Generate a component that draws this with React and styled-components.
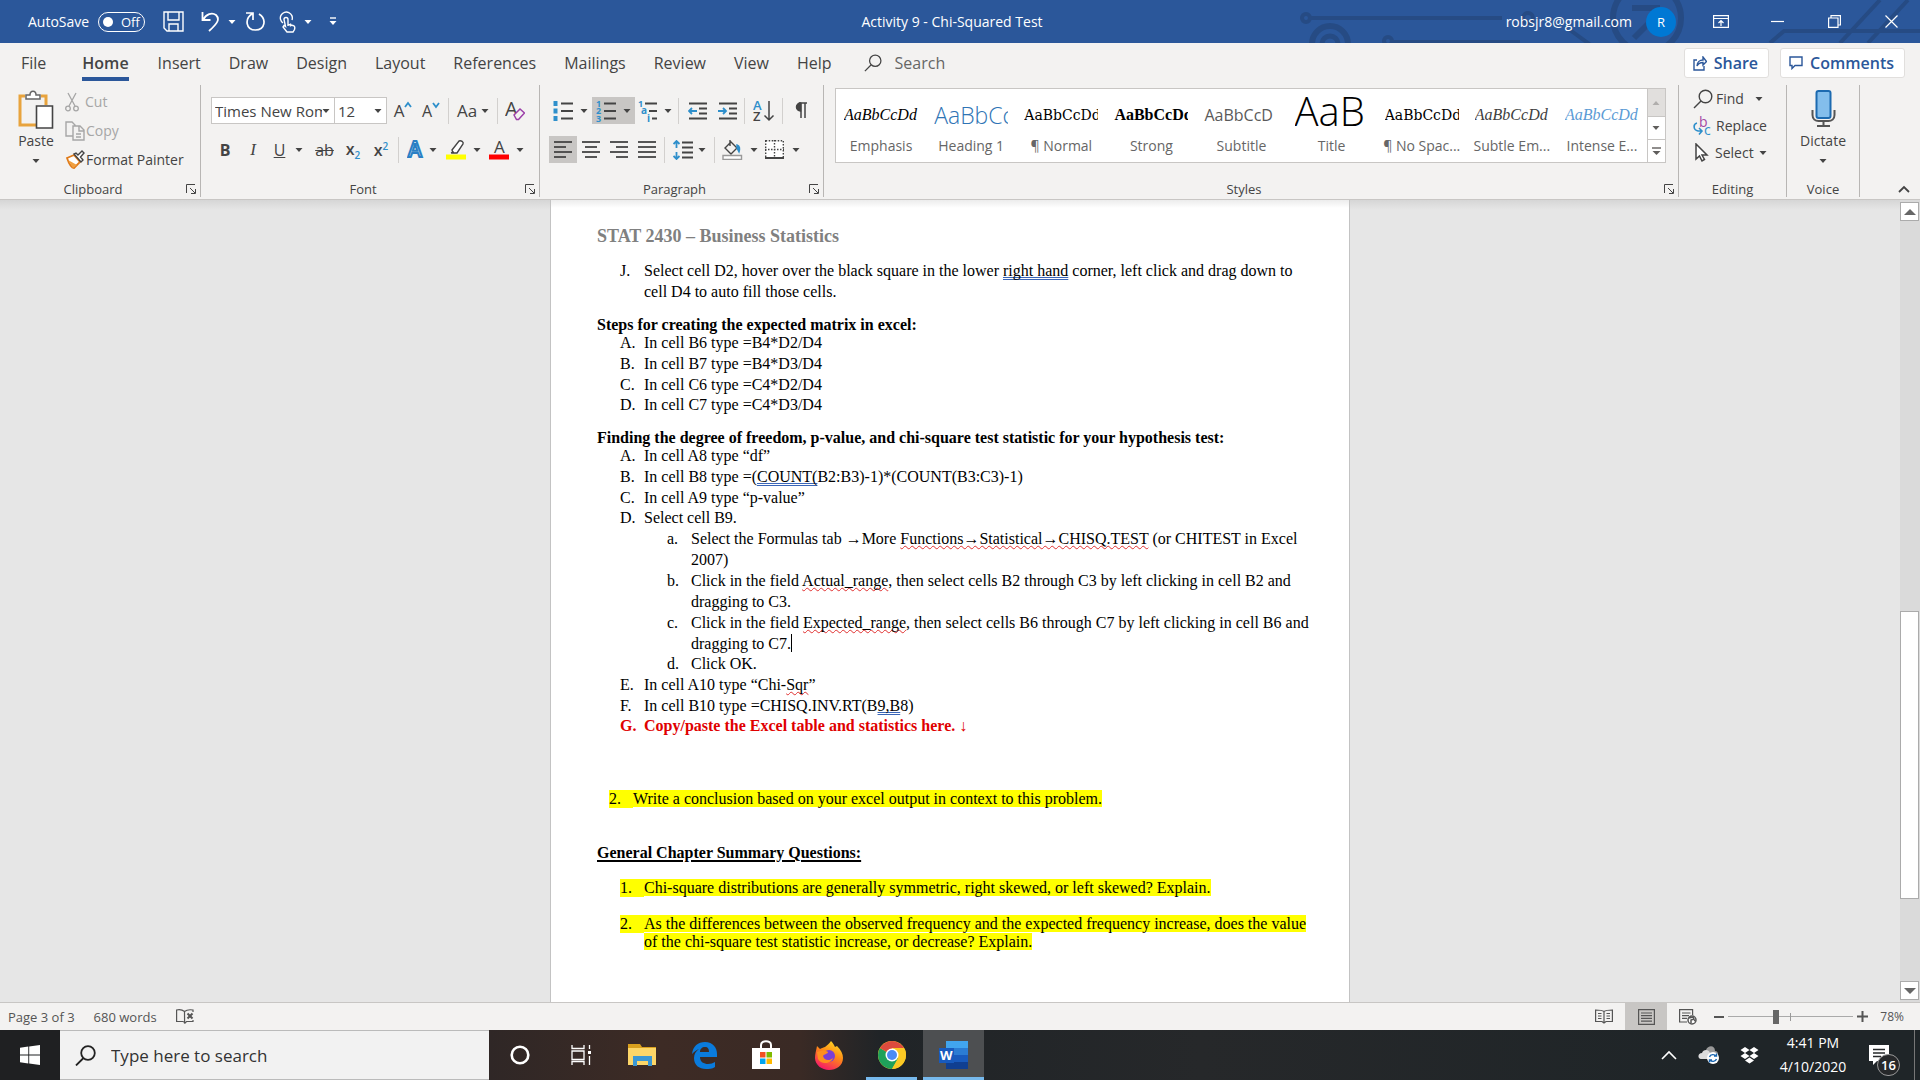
import React from 'react';
import styled, { createGlobalStyle, css } from 'styled-components';

const GlobalStyle = createGlobalStyle`
    * { box-sizing: border-box; }
    body { margin: 0; }
    body, button, input, select { font-family: "Open Sans", "Noto Sans", sans-serif; font-size: 14px; }
    button { background: none; border: 0; padding: 0; color: inherit; }
    svg { display: block; flex: none; }
`

const Window=styled.div`
    display: flex;
    flex-direction: column;
    height: 100vh;
    overflow: hidden;
    color: #444;
    background: #e6e6e6;
`

/* ---------- title bar ---------- */

const TitleBar=styled.header`
    display: grid;
    grid-template-columns: 1fr auto 1fr;
    align-items: center;
    height: 43px;
    flex: none;
    color: #fff;
    background: #2b579a;
    position: relative;
`
const Circuit=styled.svg`
    position: absolute;
    right: 0;
    top: 0;
`
const QuickAccess=styled.div`
    display: flex;
    align-items: center;
    padding-left: 28px;
`
const AutoSaveLabel=styled.label`
    width: 70px;
`
const Toggle=styled.button`
    display: flex;
    align-items: center;
    gap: 8px;
    width: 47px;
    height: 20px;
    padding-left: 4px;
    margin-right: 18px;
    border: 1px solid #fff;
    border-radius: 10px;
    font-size: 13px;
    line-height: 16px;
    &::before {
        content: '';
        width: 10px;
        height: 10px;
        border-radius: 5px;
        background: #fff;
    }
`
const QuickButton=styled.button`
    display: flex;
    align-items: center;
    gap: 8px;
    width: ${p => p.$w}px;
`
const DocTitle=styled.h1`
    margin: 0 16px 0 0;
    font-size: 14px;
    font-weight: 400;
    line-height: 38px;
`
const Account=styled.div`
    display: flex;
    align-items: center;
    justify-content: flex-end;
    position: relative;
`
const Avatar=styled.button`
    width: 30px;
    height: 30px;
    margin: 0 16px 0 14px;
    border-radius: 15px;
    font-size: 13px;
    background: #0078d4;
`
const WindowButton=styled.button`
    display: flex;
    justify-content: center;
    width: 57px;
`

/* ---------- tabs ---------- */

const TabRow=styled.nav`
    display: flex;
    align-items: center;
    height: 40px;
    flex: none;
    padding: 0 15px 0 7px;
    background: #f3f2f1;
`
const Tab=styled.button`
    padding: 0 14px;
    font-size: 16px;
    line-height: 38px;
    ${p => p.$active && css`
        margin: 0 1px 0 8px;
        font-weight: 600;
        background: linear-gradient(#2b579a, #2b579a) center 33px / calc(100% - 28px) 4px no-repeat;
    `}
`
const TabSearch=styled.label`
    display: flex;
    align-items: center;
    gap: 13px;
    flex: 1;
    margin-left: 18px;
    input {
        width: 120px;
        padding: 0;
        border: 0;
        outline: 0;
        background: none;
        font-size: 16px;
        line-height: 38px;
    }
    input::placeholder { color: #666; opacity: 1; }
`
const TabAction=styled.button`
    display: flex;
    align-items: center;
    gap: 7px;
    height: 30px;
    padding: 0 10px 0 8px;
    margin-left: 11px;
    border: 1px solid #e1dfdd;
    border-radius: 3px;
    color: #2b579a;
    font-size: 16px;
    font-weight: 600;
    background: #fff;
`

/* ---------- ribbon ---------- */

const Ribbon=styled.div`
    display: flex;
    height: 117px;
    flex: none;
    background: #f3f2f1;
    border-bottom: 1px solid #c8c6c4;
`
const GroupBox=styled.section`
    display: flex;
    flex-direction: column;
    justify-content: space-between;
    width: ${p => p.$w ? p.$w + 'px' : 'auto'};
    flex: ${p => p.$w ? 'none' : '1'};
    min-width: 0;
    margin: 2px 0;
    border-right: 1px solid #b8b6b4;
`
const GroupBody=styled.div`
    padding: ${p => p.$pad || '12px 9px 0'};
`
const GroupLabel=styled.footer`
    display: flex;
    align-items: center;
    justify-content: center;
    height: 16px;
    font-size: 13px;
    line-height: 16px;
    padding-right: ${p => p.$launcher ? 4 : 0}px;
    span { flex: 1; text-align: center; }
`
const Rows=styled.div`
    display: flex;
    flex-direction: column;
    gap: 12px;
`
const Row=styled.div`
    display: flex;
    align-items: center;
`
const ToolButton=styled.button`
    display: flex;
    align-items: center;
    justify-content: center;
    gap: ${p => p.$gap ?? 7}px;
    width: ${p => p.$w || 28}px;
    height: 27px;
    font-size: 16px;
    background: ${p => p.$active ? '#c8c6c4' : 'none'};
`
const Sep=styled.i`
    width: 1px;
    height: 26px;
    margin: 0 3px;
    background: #d2d0ce;
`
const Combo=styled.label`
    display: flex;
    align-items: center;
    justify-content: space-between;
    width: ${p => p.$w}px;
    height: 27px;
    margin-right: ${p => p.$gap || 0}px;
    padding: 0 4px 0 3px;
    border: 1px solid #c8c6c4;
    background: #fff;
    & + & { border-left: 0; }
    select {
        appearance: none;
        flex: 1;
        min-width: 0;
        padding: 0;
        border: 0;
        color: #444;
        font-size: 15px;
        background: none;
    }
`
const ClipBody=styled.div`
    display: flex;
    gap: 5px;
    font-size: 14px;
`
const BigButton=styled.button`
    display: flex;
    flex-direction: column;
    align-items: center;
    width: ${p => p.$w}px;
    font-size: 14px;
    line-height: 24px;
    svg + svg, svg:last-child { margin-top: 6px; }
`
const StackItem=styled.button`
    display: flex;
    align-items: center;
    gap: ${p => p.$gap ?? 3}px;
    height: ${p => p.$h || 29}px;
    font-size: 14px;
    color: ${p => p.disabled ? '#a6a6a6' : '#444'};
`
const StackLabel=styled.span`
    margin-right: ${p => p.$gap || 0}px;
`
const Gallery=styled.div`
    display: flex;
    height: 75px;
    border: 1px solid #c8c6c4;
    background: #fff;
`
const StyleCard=styled.button`
    display: flex;
    flex-direction: column;
    align-items: center;
    flex: 1;
    min-width: 0;
    padding-top: 8px;
    color: #666;
    line-height: 22px;
`
const Preview=styled.span`
    width: 74px;
    height: 38px;
    overflow: hidden;
    white-space: nowrap;
    text-align: left;
    line-height: ${p => p.$lh || 36}px;
    font-size: ${p => p.$size || 16}px;
    font-family: ${p => p.$font || '"Liberation Serif", serif'};
    font-style: ${p => p.$italic ? 'italic' : 'normal'};
    font-weight: ${p => p.$weight || 400};
    color: ${p => p.$color || '#000'};
`
const GalleryScroll=styled.div`
    display: grid;
    grid-template-rows: 27px 23px 1fr;
    width: 18px;
    button {
        display: flex;
        align-items: center;
        justify-content: center;
        border-left: 1px solid #c8c6c4;
        color: #605e5c;
    }
    button + button { border-top: 1px solid #c8c6c4; }
    button:first-child { background: #e1dfdd; color: #b0aeac; }
`
const RibbonEnd=styled.div`
    display: flex;
    align-items: flex-end;
    justify-content: flex-end;
    width: 60px;
    padding: 0 10px 6px 0;
`

/* ---------- document ---------- */

const Workspace=styled.main`
    display: flex;
    flex: 1;
    min-height: 0;
    background: linear-gradient(#d6d6d6, #e6e6e6 10px);
`
const Canvas=styled.div`
    display: flex;
    justify-content: center;
    flex: 1;
    overflow: hidden;
`
const Page=styled.article`
    width: 800px;
    padding: 24px 36px 40px 46px;
    border: solid #c3c3c3;
    border-width: 0 1px;
    background: linear-gradient(#ececec, #fff 8px);
    color: #000;
    font-family: "Liberation Serif", serif;
    font-size: 16px;
    line-height: 21px;
`
const PageHeader=styled.p`
    margin: 0 0 12px;
    color: #808080;
    font-size: 18px;
    font-weight: 700;
    line-height: 24px;
`
const Heading=styled.h2`
    margin: ${p => p.$top || 14}px 0 0;
    font-size: 16px;
    line-height: 17px;
`
const Underlined=styled.u`
    text-decoration-thickness: 2px;
    text-underline-offset: 2px;
`
const List=styled.ol`
    margin: 0;
    padding: 0;
    list-style: none;
`
const Item=styled.li`
    display: grid;
    grid-template-columns: 24px 1fr;
    margin-left: ${p => p.$indent || 23}px;
    margin-top: ${p => p.$top || 0}px;
    line-height: ${p => p.$lh || 21}px;
    color: ${p => p.$red ? '#e00000' : 'inherit'};
    font-weight: ${p => p.$red ? 700 : 400};
`
const Mark=styled.mark`
    color: #000;
    background: #ff0;
`
const MarkedNumber=styled(Mark)`
    display: block;
    height: 18px;
`
const Grammar=styled.span`
    text-decoration: underline double #3a66b8 1px;
    text-underline-offset: 1px;
    text-decoration-skip-ink: none;
`
const Spelling=styled.span`
    text-decoration: underline wavy #e03030 1px;
    text-underline-offset: 1px;
    text-decoration-skip-ink: none;
`
const Cursor=styled.i`
    display: inline-block;
    width: 1px;
    height: 18px;
    vertical-align: text-bottom;
    background: #000;
`
const ScrollTrack=styled.div`
    display: flex;
    flex-direction: column;
    width: 20px;
    padding: 2px 1px 2px 0;
    background: #dadada;
`
const ScrollButton=styled.button`
    display: flex;
    align-items: center;
    justify-content: center;
    height: 19px;
    border: 1px solid #ababab;
    background: #fff;
    color: #666;
`
const ScrollThumb=styled.div`
    flex: 287;
    border: 1px solid #ababab;
    background: #fff;
`
const ScrollGap=styled.div`
    flex: ${p => p.$grow};
`

/* ---------- status bar ---------- */

const StatusBar=styled.footer`
    display: flex;
    align-items: center;
    height: 28px;
    flex: none;
    padding: 0 16px 0 8px;
    border-top: 1px solid #c8c6c4;
    background: #f3f2f1;
    font-size: 13px;
    color: #555;
`
const StatusText=styled.button`
    font-size: 13px;
    line-height: 24px;
    margin-right: 19px;
`
const ViewButton=styled.button`
    display: flex;
    align-items: center;
    justify-content: center;
    width: 42px;
    height: 27px;
    background: ${p => p.$active ? '#c8c6c4' : 'none'};
`
const Spacer=styled.div`
    flex: 1;
`
const ZoomOutButton=styled.button`
    margin-left: 5px;
`
const ZoomSlider=styled.input`
    appearance: none;
    width: 125px;
    height: 16px;
    margin: 0 4px;
    background:
        linear-gradient(#999, #999) 62px center / 1px 8px no-repeat,
        linear-gradient(#aaa, #aaa) center / 100% 1px no-repeat;
    &::-webkit-slider-thumb {
        appearance: none;
        width: 6px;
        height: 14px;
        background: #666;
    }
`
const ZoomValue=styled.button`
    width: 36px;
    font-size: 12px;
    text-align: right;
`

/* ---------- taskbar ---------- */

const Taskbar=styled.footer`
    display: flex;
    height: 50px;
    flex: none;
    color: #fff;
    background: linear-gradient(90deg, #1f2022 60px, #2f2726 489px, #3d2b25 660px, #3a2a25 800px, #202427 880px, #26282a 1200px, #1f2528 1700px);
`
const TaskButton=styled.button`
    display: flex;
    align-items: center;
    justify-content: center;
    width: ${p => p.$w || 62}px;
    border-bottom: ${p => p.$open ? '3px solid #76b9ed' : '0'};
    padding-top: ${p => p.$open ? '3px' : '0'};
    margin: ${p => p.$margin || '0'};
    background: ${p => p.$active ? '#4d4f51' : 'none'};
`
const TaskSearch=styled.label`
    display: flex;
    align-items: center;
    gap: 15px;
    width: 429px;
    padding-left: 15px;
    border: solid #bbb;
    border-width: 1px 0;
    background: #f2f2f2;
    input {
        flex: 1;
        min-width: 0;
        padding: 0;
        border: 0;
        outline: 0;
        background: none;
        font-size: 17px;
    }
    input::placeholder { color: #333; opacity: 1; }
`
const Tray=styled.div`
    display: flex;
    align-items: center;
    flex: 1;
    justify-content: flex-end;
    padding-right: 5px;
`
const TrayButton=styled.button`
    display: flex;
    justify-content: center;
    width: 40px;
`
const Clock=styled.button`
    width: 88px;
    line-height: 24px;
    font-size: 14px;
`
const Notices=styled.button`
    display: flex;
    position: relative;
    width: 46px;
    height: 50px;
    margin-left: 12px;
    padding-top: 15px;
    border-right: 1px solid #777;
`
const NoticeCount=styled.span`
    position: absolute;
    left: 8px;
    top: 24px;
    width: 23px;
    height: 22px;
    border: 1px solid #999;
    border-radius: 11px;
    background: #26282a;
    font-size: 13px;
    font-weight: 600;
    line-height: 20px;
`

/* ---------- icons ---------- */

const Icon = ({ w = 20, h = w, box, sw = 1.4, children, ...rest }) => (
    <svg width={w} height={h} viewBox={box || `0 0 ${w} ${h}`} fill="none" stroke="currentColor" strokeWidth={sw} aria-hidden="true" {...rest}>
        {children}
    </svg>
)
const T = ({ x, y, s = 16, c = 'currentColor', b = 400, children }) => (
    <text x={x} y={y} fontSize={s} fontWeight={b} fill={c} stroke="none">{children}</text>
)
const Caret = () => <Icon w={8} h={4}><path d="M0.5 0h7L4 4z" fill="currentColor" stroke="none"/></Icon>
const CaretUp = () => <Icon w={8} h={4}><path d="M0.5 4h7L4 0z" fill="currentColor" stroke="none"/></Icon>
const Magnifier = ({ w, sw }) => (
    <Icon w={w} box="0 0 20 20" sw={sw || 1.4}><circle cx="12.5" cy="7.5" r="6.3"/><path d="M8 12L1 19"/></Icon>
)
const Launcher = () => <Icon w={10} sw={1}><path d="M.5 9V.5H9M4 4l5 5M9.5 5v4.5H5"/></Icon>
const Lines = ({ rows }) => (
    <Icon w={18} h={20} sw={1.8}>
        {rows.map(([a, b], i) => <path key={i} d={`M${a} ${2 + i * 5}H${b}`}/>)}
    </Icon>
)
const blue = '#2e8fcb'

const Group = ({ label, launcher, $w, $pad, children }) => (
    <GroupBox $w={$w}>
        <GroupBody $pad={$pad}>{children}</GroupBody>
        <GroupLabel $launcher={launcher}>
            <span>{label}</span>
            {launcher && <button aria-label={`${label} settings`}><Launcher/></button>}
        </GroupLabel>
    </GroupBox>
)

const sans = '"Open Sans", sans-serif'
const previews = [
    { name: 'Emphasis', text: 'AaBbCcDd', $italic: true },
    { name: 'Heading 1', text: 'AaBbCc', $font: sans, $size: 23, $weight: 300, $color: '#2e74b5' },
    { name: '¶ Normal', text: 'AaBbCcDd', $font: '"DejaVu Serif", serif', $size: 14 },
    { name: 'Strong', text: 'AaBbCcDd', $weight: 700 },
    { name: 'Subtitle', text: 'AaBbCcD', $font: sans, $size: 16, $color: '#5a5a5a' },
    { name: 'Title', text: 'AaB', $font: sans, $size: 40, $weight: 300, $lh: 28 },
    { name: '¶ No Spac...', text: 'AaBbCcDd', $font: '"DejaVu Serif", serif', $size: 14 },
    { name: 'Subtle Em...', text: 'AaBbCcDd', $italic: true, $color: '#404040' },
    { name: 'Intense E...', text: 'AaBbCcDd', $italic: true, $color: '#5b9bd5' },
]

function TopBar(){
    return (
        <TitleBar>
            <Circuit width="640" height="43" fill="none" stroke="#264b84" strokeWidth="4" aria-hidden="true">
                <circle cx="26" cy="18" r="4"/><path d="M31 18H222"/>
                <circle cx="50" cy="44" r="18" strokeWidth="6"/><circle cx="50" cy="44" r="8" strokeWidth="5"/>
                <circle cx="108" cy="41" r="4"/><path d="M113 42H240M290 30l22 16"/>
                <circle cx="248" cy="18" r="5"/>
                <circle cx="367" cy="18" r="34" strokeWidth="6"/><path d="M352 8h28M382 10l-28 28" strokeWidth="6"/>
                <path d="M490 43l14-12H640M560 43L600 0M588 43L628 0" strokeWidth="4"/>
            </Circuit>
            <QuickAccess>
                <AutoSaveLabel htmlFor="autosave">AutoSave</AutoSaveLabel>
                <Toggle id="autosave" role="switch" aria-checked="false">Off</Toggle>
                <QuickButton $w={38} aria-label="Save">
                    <Icon w={21}><path d="M1 1h19v19H4l-3-3zM5 1v8h11V1M6 20v-7h9v7"/></Icon>
                </QuickButton>
                <QuickButton $w={44} aria-label="Undo">
                    <Icon w={19} h={21} sw={1.8}><path d="M1.500 1v8h8M2 9C5 3 11 1 15 4c4 4 2 8-7 16"/></Icon><Caret/>
                </QuickButton>
                <QuickButton $w={34} aria-label="Repeat">
                    <Icon w={21} sw={1.7}><path d="M1 2h7v7M7.500 2.500C-1 8 1 19 10.500 19S22 8 14 3"/></Icon>
                </QuickButton>
                <QuickButton $w={50} aria-label="Touch mode">
                    <Icon w={17} h={22}><path d="M4 12a6 6 0 1 1 9-3M5 8.500a2 2 0 1 1 4 0v5l5 1c2 .5 2 2 1.500 4L14 21H8l-4-5 1-1.500 1.500 1zM9 12v3M11.500 12.500v3"/></Icon><Caret/>
                </QuickButton>
                <QuickButton $w={12} aria-label="Customize quick access">
                    <Icon w={8} h={9}><path d="M1 1h6"/><path d="M.5 4h7L4 8z" fill="currentColor" stroke="none"/></Icon>
                </QuickButton>
            </QuickAccess>
            <DocTitle>Activity 9 - Chi-Squared Test</DocTitle>
            <Account>
                <span>robsjr8@gmail.com</span>
                <Avatar>R</Avatar>
                <WindowButton aria-label="Ribbon display options">
                    <Icon w={16} h={13} sw={1.2}><path d="M.6.6h14.800v11.800H.6zM.6 3.500h14.800M8 11V5.500M5.500 8L8 5.500 10.500 8"/></Icon>
                </WindowButton>
                <WindowButton aria-label="Minimize"><Icon w={13} sw={1.2}><path d="M0 6.500h13"/></Icon></WindowButton>
                <WindowButton aria-label="Restore">
                    <Icon w={13} sw={1.2}><path d="M.6 3h9.400v9.400H.6zM3 3V.6h9.400V10H10"/></Icon>
                </WindowButton>
                <WindowButton aria-label="Close"><Icon w={13} sw={1.2}><path d="M.5.5l12 12M12.500.5l-12 12"/></Icon></WindowButton>
            </Account>
        </TitleBar>
    )
}

function Tabs(){
    return (
        <TabRow>
            <Tab>File</Tab>
            <Tab $active>Home</Tab>
            {['Insert', 'Draw', 'Design', 'Layout', 'References', 'Mailings', 'Review', 'View', 'Help'].map(t => (
                <Tab key={t}>{t}</Tab>
            ))}
            <TabSearch>
                <Magnifier w={18}/>
                <input placeholder="Search" aria-label="Search commands"/>
            </TabSearch>
            <TabAction>
                <Icon w={14} h={15}><path d="M4 4H1v10h10v-4M4 10c0-4 3-6 6-6V1l3.500 4.500L10 9V6.500C7 6.500 5 8 4 10z"/></Icon>Share
            </TabAction>
            <TabAction>
                <Icon w={14} h={14}><path d="M1 1h12v8.500H6L3 12.500v-3H1z"/></Icon>Comments
            </TabAction>
        </TabRow>
    )
}

function ClipboardGroup(){
    return (
        <Group label="Clipboard" launcher $w={201} $pad="2px 0 0 12px">
            <ClipBody>
                <BigButton $w={48}>
                    <Icon w={36} h={42} sw={2}>
                        <path d="M7 9H2v29h18M23 9h5v9" stroke="#e8a33d" strokeWidth="3"/>
                        <path d="M8 12V8h4c0-5 6-5 6 0h4v4z" fill="#fff" stroke="#666" strokeWidth="1.5"/>
                        <path d="M18.500 19h16v22h-16z" fill="#fff" stroke="#444" strokeWidth="1.600"/>
                    </Icon>
                    Paste
                    <Caret/>
                </BigButton>
                <div>
                    <StackItem disabled $gap={6}>
                        <Icon w={14} h={20} sw={1.3}><path d="M3 1l7 13M11 1L4 14"/><circle cx="3" cy="16.500" r="2.300"/><circle cx="11" cy="16.500" r="2.300"/></Icon>Cut
                    </StackItem>
                    <StackItem disabled $gap={1}>
                        <Icon w={20} h={20} sw={1.400}><path d="M8 15H1V1h6l3 3v1M8 5h7l4 4v10H8zM14 5v5h5M11 13h5M11 16h5"/></Icon>Copy
                    </StackItem>
                    <StackItem $gap={1}>
                        <Icon w={20} h={19}><path d="M2 8l7-3 6 7-6 6c-2 0-5-4-7-10z" fill="#fff" stroke="#e07b1a" strokeWidth="1.800"/><path d="M3 10l9 5-4 3z" fill="#f0a040" stroke="none"/><path d="M9 4l7 8 2-2-2.500-3L19 3l-2-2-4 4-2-2z" fill="#fff" stroke="#444"/></Icon>Format Painter
                    </StackItem>
                </div>
            </ClipBody>
        </Group>
    )
}

const Letter=styled.span`
    font-size: ${p => p.$size || 17}px;
    line-height: 22px;
    font-weight: ${p => p.$weight || 400};
    font-style: ${p => p.$italic ? 'italic' : 'normal'};
    font-family: ${p => p.$italic ? '"Liberation Serif", serif' : 'inherit'};
    text-decoration: ${p => p.$deco || 'none'};
    sub, sup { color: ${blue}; font-size: 10px; line-height: 10px; }
`
const Grow = ({ d }) => <Icon w={8} h={20} sw={1.8}><path d={d} stroke={blue}/></Icon>

function FontGroup(){
    return (
        <Group label="Font" launcher $w={339} $pad="12px 0 0 10px">
            <Rows>
                <Row>
                    <Combo $w={124}>
                        <select aria-label="Font name"><option>Times New Roman</option></select><Caret/>
                    </Combo>
                    <Combo $w={52} $gap={2}>
                        <select aria-label="Font size"><option>12</option></select><Caret/>
                    </Combo>
                    <ToolButton $gap={0} aria-label="Grow font"><Letter>A</Letter><Grow d="M1 6l3-4 3 4"/></ToolButton>
                    <ToolButton $gap={0} aria-label="Shrink font"><Letter $size={16}>A</Letter><Grow d="M1 2l3 4 3-4"/></ToolButton>
                    <Sep/>
                    <ToolButton $w={42} $gap={4}><Letter $size={17}>Aa</Letter><Caret/></ToolButton>
                    <Sep/>
                    <ToolButton aria-label="Clear formatting">
                        <Icon w={20} h={21} sw={1.500}><T x={0} y={16} s={20}>A</T><path d="M9 15l6-6 4.500 4-6 6.500h-2z" fill="#f3f2f1" stroke="#9b3fa8"/></Icon>
                    </ToolButton>
                </Row>
                <Row>
                    <ToolButton aria-label="Bold"><Letter $weight={700} $size={16}>B</Letter></ToolButton>
                    <ToolButton aria-label="Italic"><Letter $italic>I</Letter></ToolButton>
                    <ToolButton $w={43} $gap={10} aria-label="Underline"><Letter $deco="underline" $size={16}>U</Letter><Caret/></ToolButton>
                    <ToolButton $w={29} aria-label="Strikethrough"><Letter $deco="line-through" $size={16}>ab</Letter></ToolButton>
                    <ToolButton aria-label="Subscript"><Letter $weight={600} $size={16}>x<sub>2</sub></Letter></ToolButton>
                    <ToolButton aria-label="Superscript"><Letter $weight={600} $size={16}>x<sup>2</sup></Letter></ToolButton>
                    <Sep/>
                    <ToolButton $w={40} $gap={4} aria-label="Text effects">
                        <Icon w={18} h={20}><text x="1" y="17" fontSize="21" fontWeight="600" fill="#d5e8f7" stroke="#2a7fc4" strokeWidth="2">A</text></Icon>
                        <Caret/>
                    </ToolButton>
                    <ToolButton $w={43} aria-label="Highlight">
                        <Icon w={20} h={21}><path d="M6 11l7-9c2-1 5 1 4 3l-6 9H7zM5 14l3-1" fill="#fff"/><path d="M0 18h20" stroke="#ff0" strokeWidth="5"/></Icon>
                        <Caret/>
                    </ToolButton>
                    <ToolButton $w={43} aria-label="Font color">
                        <Icon w={20} h={21} sw={1.500}><T x={5} y={14} s={17}>A</T><path d="M0 18h20" stroke="#f00" strokeWidth="5"/></Icon>
                        <Caret/>
                    </ToolButton>
                </Row>
            </Rows>
        </Group>
    )
}

function ParagraphGroup(){
    return (
        <Group label="Paragraph" launcher $w={284} $pad="12px 0 0 9px">
            <Rows>
                <Row>
                    <ToolButton $w={43} aria-label="Bullets">
                        <Icon w={20} h={20} sw={1.8}><path d="M8 2.500h12M8 10h12M8 17.500h12"/><path d="M2.500 0v5M2.500 7.500v5M2.500 15v5" stroke={blue} strokeWidth="4"/></Icon><Caret/>
                    </ToolButton>
                    <ToolButton $w={43} $active aria-label="Numbering">
                        <Icon w={20} h={22} sw={1.8}><path d="M8 3.500h12M8 11h12M8 18.500h12"/><T x={0} y={7} s={9} c={blue} b={700}>1</T><T x={0} y={14} s={9} c={blue} b={700}>2</T><T x={0} y={22} s={9} c={blue} b={700}>3</T></Icon><Caret/>
                    </ToolButton>
                    <ToolButton $w={40} $gap={6} aria-label="Multilevel list">
                        <Icon w={20} h={22} sw={1.8}><path d="M7 3.500h12M11 11h8M14 18.500h5"/><T x={0} y={7} s={9} c={blue} b={700}>1</T><T x={3} y={14} s={10} c={blue} b={700}>a</T><T x={9} y={22} s={10} c={blue} b={700}>i</T></Icon><Caret/>
                    </ToolButton>
                    <Sep/>
                    <ToolButton $w={31} aria-label="Decrease indent">
                        <Icon w={19} h={18} sw={1.8}><path d="M1 1.500h18M11 6.500h8M11 11.500h8M1 16.500h18"/><path d="M9 9H1M4 6L1 9l3 3" stroke={blue}/></Icon>
                    </ToolButton>
                    <ToolButton aria-label="Increase indent">
                        <Icon w={19} h={18} sw={1.8}><path d="M1 1.500h18M11 6.500h8M11 11.500h8M1 16.500h18"/><path d="M0 9h8M5 6l3 3-3 3" stroke={blue}/></Icon>
                    </ToolButton>
                    <Sep/>
                    <ToolButton $w={31} aria-label="Sort">
                        <Icon w={22} h={22} sw={1.500}><T x={0} y={10} s={13} c={blue} b={600}>A</T><T x={0} y={21} s={13} b={600}>Z</T><path d="M16 1v19M11.500 15.500L16 20l4.500-4.500"/></Icon>
                    </ToolButton>
                    <Sep/>
                    <ToolButton $w={29} aria-label="Show paragraph marks">
                        <Icon w={13} h={17} sw={1.500}><path d="M6.500 1A4 4 0 0 0 6.500 9z" fill="currentColor"/><path d="M5 1h8M7 1v15M11 1v15"/></Icon>
                    </ToolButton>
                </Row>
                <Row>
                    <ToolButton $active aria-label="Align left"><Lines rows={[[0, 18], [0, 12], [0, 18], [0, 12]]}/></ToolButton>
                    <ToolButton aria-label="Center"><Lines rows={[[0, 18], [3, 15], [0, 18], [3, 15]]}/></ToolButton>
                    <ToolButton aria-label="Align right"><Lines rows={[[0, 18], [6, 18], [0, 18], [6, 18]]}/></ToolButton>
                    <ToolButton aria-label="Justify"><Lines rows={[[0, 18], [0, 18], [0, 18], [0, 18]]}/></ToolButton>
                    <Sep/>
                    <ToolButton $w={43} $gap={5} aria-label="Line spacing">
                        <Icon w={20} h={20} sw={1.8}><path d="M9 2.500h11M9 7.500h11M9 12.500h11M9 17.500h11"/><path d="M3.500 1v7M3.500 12v7M.5 4l3-3 3 3M.5 16l3 3 3-3" stroke={blue}/></Icon><Caret/>
                    </ToolButton>
                    <Sep/>
                    <ToolButton $w={43} aria-label="Shading">
                        <Icon w={21} h={21}><path d="M8 1v6M9 3l6 6-6 6-6-6z"/><path d="M15 6c3 1 3 4 2 7l-2-4z" fill={blue} stroke={blue}/><path d="M1 16.500h18.500v4H1z" stroke="#999" fill="#fff"/></Icon><Caret/>
                    </ToolButton>
                    <ToolButton $w={43} $gap={8} aria-label="Borders">
                        <Icon w={19} h={19}><path d="M.7.700h17.600v17.600H.7zM9.500 0v18M0 9.500h19" strokeDasharray="1.500 1.500" fill="#fff"/><path d="M0 18h19" strokeWidth="2"/></Icon><Caret/>
                    </ToolButton>
                </Row>
            </Rows>
        </Group>
    )
}

function StylesGroup(){
    return (
        <Group label="Styles" launcher $pad="3px 12px 0 11px">
            <Gallery>
                {previews.map(({ name, text, ...look }) => (
                    <StyleCard key={name}>
                        <Preview {...look}>{text}</Preview>
                        {name}
                    </StyleCard>
                ))}
                <GalleryScroll>
                    <button aria-label="Previous styles"><CaretUp/></button>
                    <button aria-label="Next styles"><Caret/></button>
                    <button aria-label="More styles">
                        <Icon w={9} h={9}><path d="M0 1h9"/><path d="M.5 4h8l-4 4z" fill="currentColor" stroke="none"/></Icon>
                    </button>
                </GalleryScroll>
            </Gallery>
        </Group>
    )
}

function EditingGroups(){
    return (
        <>
            <Group label="Editing" $w={108} $pad="0 0 0 14px">
                <div>
                    <StackItem $h={27}>
                        <Magnifier w={20}/><StackLabel $gap={8}>Find</StackLabel><Caret/>
                    </StackItem>
                    <StackItem $h={27} $gap={4}>
                        <Icon w={19} h={20} sw={1.600}><T x={6} y={11} s={14} c="#a349a4">b</T><T x={11} y={19} s={14} c={blue}>c</T><path d="M4 7c-4 1-4 7 1 8h4M6 12l3 3-3 3.500" stroke={blue}/></Icon>Replace
                    </StackItem>
                    <StackItem $h={27} $gap={5}>
                        <Icon w={17} h={20} sw={1.500}><path d="M3 1v15l3.500-3 2.500 5 2.500-1.500L9 12h5z" fill="#fff"/></Icon>Select<Caret/>
                    </StackItem>
                </div>
            </Group>
            <Group label="Voice" $w={73} $pad="2px 0 0">
                <BigButton $w={72}>
                    <Icon w={25} h={42} sw={2}><rect x="5.500" y="4" width="14" height="27" rx="2" fill="#83beec" stroke="#1c6ab0"/><path d="M1.500 23v5c0 4 3 6 6 6h10c3 0 6-2 6-6v-5M12.500 34v5M6 39h13" stroke="#555"/></Icon>
                    Dictate
                    <Caret/>
                </BigButton>
            </Group>
        </>
    )
}

function Document(){
    return (
        <Workspace>
            <Canvas>
                <Page>
                    <PageHeader>STAT 2430 – Business Statistics</PageHeader>
                    <List>
                        <Item><span>J.</span><span>Select cell D2, hover over the black square in the lower <Grammar>right hand</Grammar> corner, left click and drag down to cell D4 to auto fill those cells.</span></Item>
                    </List>
                    <Heading>Steps for creating the expected matrix in excel:</Heading>
                    <List>
                        <Item $lh={20}><span>A.</span><span>In cell B6 type =B4*D2/D4</span></Item>
                        <Item><span>B.</span><span>In cell B7 type =B4*D3/D4</span></Item>
                        <Item><span>C.</span><span>In cell C6 type =C4*D2/D4</span></Item>
                        <Item $lh={20}><span>D.</span><span>In cell C7 type =C4*D3/D4</span></Item>
                    </List>
                    <Heading>Finding the degree of freedom, p-value, and chi-square test statistic for your hypothesis test:</Heading>
                    <List>
                        <Item $lh={20}><span>A.</span><span>In cell A8 type “df”</span></Item>
                        <Item><span>B.</span><span>In cell B8 type =(<Grammar>COUNT(</Grammar>B2:B3)-1)*(COUNT(B3:C3)-1)</span></Item>
                        <Item><span>C.</span><span>In cell A9 type “p-value”</span></Item>
                        <Item $lh={20}><span>D.</span><span>Select cell B9.</span></Item>
                    </List>
                    <List>
                        <Item $indent={70}><span>a.</span><span>Select the Formulas tab →More <Spelling>Functions→Statistical→CHISQ.TEST</Spelling> (or CHITEST in Excel 2007)</span></Item>
                        <Item $indent={70}><span>b.</span><span>Click in the field <Spelling>Actual_range</Spelling>, then select cells B2 through C3 by left clicking in cell B2 and dragging to C3.</span></Item>
                        <Item $indent={70}><span>c.</span><span>Click in the field <Spelling>Expected_range</Spelling>, then select cells B6 through C7 by left clicking in cell B6 and dragging to C7.<Cursor/></span></Item>
                        <Item $indent={70} $lh={20}><span>d.</span><span>Click OK.</span></Item>
                    </List>
                    <List>
                        <Item><span>E.</span><span>In cell A10 type “Chi-<Spelling>Sqr</Spelling>”</span></Item>
                        <Item><span>F.</span><span>In cell B10 type =CHISQ.INV.RT(B<Grammar>9,B</Grammar>8)</span></Item>
                        <Item $red $lh={20}><span>G.</span><span>Copy/paste the Excel table and statistics here. ↓</span></Item>
                    </List>
                    <List>
                        <Item $indent={12} $top={54} $lh={18}><MarkedNumber>2.</MarkedNumber><span><Mark>Write a conclusion based on your excel output in context to this problem.</Mark></span></Item>
                    </List>
                    <Heading $top={36}><Underlined>General Chapter Summary Questions:</Underlined></Heading>
                    <List>
                        <Item $top={18} $lh={18}><MarkedNumber>1.</MarkedNumber><span><Mark>Chi-square distributions are generally symmetric, right skewed, or left skewed? Explain.</Mark></span></Item>
                        <Item $top={18} $lh={18}><MarkedNumber>2.</MarkedNumber><span><Mark>As the differences between the observed frequency and the expected frequency increase, does the value of the chi-square test statistic increase, or decrease? Explain.</Mark></span></Item>
                    </List>
                </Page>
            </Canvas>
            <ScrollTrack>
                <ScrollButton aria-label="Scroll up"><Icon w={12} h={6}><path d="M0 6h12L6 0z" fill="currentColor" stroke="none"/></Icon></ScrollButton>
                <ScrollGap $grow={391}/>
                <ScrollThumb/>
                <ScrollGap $grow={82}/>
                <ScrollButton aria-label="Scroll down"><Icon w={12} h={6}><path d="M0 0h12L6 6z" fill="currentColor" stroke="none"/></Icon></ScrollButton>
            </ScrollTrack>
        </Workspace>
    )
}

function Status(){
    return (
        <StatusBar>
            <StatusText>Page 3 of 3</StatusText>
            <StatusText>680 words</StatusText>
            <StatusText aria-label="Proofing errors">
                <Icon w={18} h={15} sw={1.200}><path d="M8.500 2.500C6 .5 3 .5.6 1v11.500h6c1 0 2 1 2 2zM8.500 2.500C11 .5 14 .5 17 1v2M17 11v1.500h-6.500l-2 2"/><path d="M11.500 4.500l5 5M16.500 4.500l-5 5" strokeWidth="2"/></Icon>
            </StatusText>
            <Spacer/>
            <ViewButton aria-label="Read mode">
                <Icon w={18} h={15} sw={1.200}><path d="M9 2.500C7 1 3 1 .6 1v11.500H7l2 1.500 2-1.500h6.400V1C15 1 11 1 9 2.500zV14M3 4.500h3.500M3 7h3.500M3 9.500h3.500M11.500 4.500H15M11.500 7H15M11.500 9.500H15"/></Icon>
            </ViewButton>
            <ViewButton $active aria-label="Print layout">
                <Icon w={17} h={16} sw={1.200}><path d="M.6.600h15.800v14.800H.6zM3 4h11M3 6.700h11M3 9.400h11M3 12.100h11"/></Icon>
            </ViewButton>
            <ViewButton aria-label="Web layout">
                <Icon w={18} h={16} sw={1.200}><path d="M8 13H.6V.600h13V6M3 4h8.500M3 6.700h7M3 9.400h5"/><circle cx="13" cy="11" r="4" fill="#fff" strokeWidth="1.500"/><path d="M10 9l4-1 1 2-3 1v3M15 12l1.500-1" strokeWidth="1.500"/></Icon>
            </ViewButton>
            <ZoomOutButton aria-label="Zoom out"><Icon w={10} sw={2}><path d="M0 5h10"/></Icon></ZoomOutButton>
            <ZoomSlider type="range" min="0" max="100" defaultValue="38" aria-label="Zoom"/>
            <button aria-label="Zoom in"><Icon w={11} sw={2}><path d="M0 5.500h11M5.500 0v11"/></Icon></button>
            <ZoomValue>78%</ZoomValue>
        </StatusBar>
    )
}

function BottomBar(){
    return (
        <Taskbar>
            <TaskButton $w={60} aria-label="Start">
                <Icon w={20} h={20} stroke="none"><path d="M0 2.800L8.300 1.600v7.900H0zM9.200 1.500L20 0v9.500H9.200zM0 10.500h8.300v7.900L0 17.200zM9.200 10.500H20V20L9.200 18.500z" fill="#fff"/></Icon>
            </TaskButton>
            <TaskSearch>
                <Icon w={21} sw={1.800} stroke="#222"><circle cx="13" cy="8" r="6.800"/><path d="M8.500 13L1 20.500"/></Icon>
                <input placeholder="Type here to search" aria-label="Search Windows"/>
            </TaskSearch>
            <TaskButton aria-label="Cortana"><Icon w={20} sw={2.600}><circle cx="10" cy="10" r="8.300"/></Icon></TaskButton>
            <TaskButton $w={60} aria-label="Task view">
                <Icon w={21} h={20} sw={1.300}><path d="M1 0v3.500h12V0M1 6h12v8.500H1zM1 20v-3.500h12V20M18.500 0v4M18.500 11v9"/><path d="M17 6h3v3h-3z" fill="#fff" stroke="none"/></Icon>
            </TaskButton>
            <TaskButton aria-label="File Explorer">
                <Icon w={28} h={24} stroke="none"><path d="M0 1h12l2 3h14v18H0z" fill="#d9a01e"/><path d="M0 5h28v17H0z" fill="#fcd668"/><path d="M5 23V13h19v10h-4v-5H9v5z" fill="#3a97d3"/></Icon>
            </TaskButton>
            <TaskButton aria-label="Edge">
                <Icon w={26} h={27} stroke="none"><path d="M1 12C2 4 7 0 14 0c8 0 12 6 12 12v3H9c0 5 4 7 8 7 3 0 5-1 7-2v5c-3 2-6 2-9 2-7 0-12-4-12-11 0-4 2-7 5-9-3 1-5 3-7 5zM9 10h9c0-3-1-5-4-5s-5 2-5 5z" fill="#0a7bdc"/></Icon>
            </TaskButton>
            <TaskButton aria-label="Store">
                <Icon w={28} h={30}><path d="M9 9V5c0-5 10-5 10 0v4" strokeWidth="2"/><path d="M0 8h28v21H0z" fill="#fff" stroke="none"/><g stroke="none"><path d="M8 12h5.500v5.500H8z" fill="#f25022"/><path d="M14.500 12H20v5.500h-5.500z" fill="#7fba00"/><path d="M8 18.500h5.500V24H8z" fill="#00a4ef"/><path d="M14.500 18.500H20V24h-5.500z" fill="#ffb900"/></g></Icon>
            </TaskButton>
            <TaskButton aria-label="Firefox">
                <svg width="29" height="29" viewBox="0 0 29 29" aria-hidden="true">
                    <defs><linearGradient id="fox" x1="0.8" y1="0" x2="0.3" y2="1"><stop offset="0" stopColor="#ffe226"/><stop offset=".45" stopColor="#ff8a16"/><stop offset="1" stopColor="#f5156c"/></linearGradient></defs>
                    <path d="M3 5l3 3c2-1 4-2 5-2 2-2 4-3 6-6 2 2 3 4 4 6l2-1c4 4 6 8 6 12 0 8-7 12-14 12S1 24 1 17c0-4 1-7 2-12z" fill="url(#fox)"/>
                    <circle cx="15" cy="15" r="6" fill="#7a3fd6"/>
                    <path d="M3 11c4-2 8-2 11 0 0 2-4 2-5 4 1 5 7 5 10 2-2 6-12 7-15 1z" fill="#ff8f1f"/>
                </svg>
            </TaskButton>
            <TaskButton $w={51} $open $margin="0 0 0 7px" aria-label="Chrome">
                <svg width="28" height="28" viewBox="0 0 28 28" aria-hidden="true">
                    <circle cx="14" cy="14" r="14" fill="#fbc924"/>
                    <path d="M14 14L1.900 7A14 14 0 0 0 14 28l6-10.500z" fill="#1fa15a"/>
                    <path d="M14 14L1.900 7A14 14 0 0 1 26.100 7H14z" fill="#dd4b3e"/>
                    <path d="M14 7.500h12.400A14 14 0 0 1 14 28l6-10.500z" fill="#fbc924"/>
                    <circle cx="14" cy="14" r="6.500" fill="#fff"/><circle cx="14" cy="14" r="5" fill="#4b8bf4"/>
                </svg>
            </TaskButton>
            <TaskButton $w={61} $open $active $margin="0 0 0 6px" aria-label="Word">
                <Icon w={29} h={28} stroke="none">
                    <path d="M7 0h22v7H7z" fill="#41a5ee"/><path d="M7 7h22v7H7z" fill="#2b7cd3"/><path d="M7 14h22v7H7z" fill="#185abd"/><path d="M7 21h22v7H7z" fill="#103f91"/>
                    <path d="M0 7h15v15H0z" fill="#185abd"/><T x={1} y={19} s={13} c="#fff" b={700}>W</T>
                </Icon>
            </TaskButton>
            <Tray>
                <TrayButton aria-label="Show hidden icons"><Icon w={16} h={10} sw={1.600}><path d="M1 9l7-7 7 7"/></Icon></TrayButton>
                <TrayButton aria-label="OneDrive">
                    <Icon w={22} h={18} stroke="none"><path d="M8 4c2-5 9-5 9 1 4 0 4 6 1 7H8z" fill="#999"/><path d="M3 13c-4-1-3-6 1-6 1-4 7-4 8 0l3 6z" fill="#ddd"/><circle cx="15" cy="12" r="6" fill="#fff"/><path d="M11.500 11c1-3 5-3 6.500-1M18.500 13c-1 3-5 3-6.500 1M18.500 7.500V10H16M11.500 16.500V14H14" fill="none" stroke="#1a66b0" strokeWidth="1.400"/></Icon>
                </TrayButton>
                <TrayButton aria-label="Dropbox">
                    <Icon w={19} h={17} stroke="none"><path d="M5 0l4.500 3L5 6 .5 3zM14 0l4.500 3L14 6 9.500 3zM5 6l4.500 3L5 12 .5 9zM14 6l4.500 3-4.500 3-4.500-3zM9.500 10.500l4.500 3-4.500 3-4.500-3z" fill="#fff"/></Icon>
                </TrayButton>
                <Clock>4:41 PM<br/>4/10/2020</Clock>
                <Notices aria-label="Notifications, 16 new">
                    <Icon w={20} h={20}><path d="M0 0h20v16H8l-4 4v-4H0z" fill="#fff" stroke="none"/><path d="M4 4.500h12M4 8h12M4 11.500h8" stroke="#26282a"/></Icon>
                    <NoticeCount>16</NoticeCount>
                </Notices>
            </Tray>
        </Taskbar>
    )
}

function App(){
    return (
        <>
            <GlobalStyle/>
            <Window>
                <TopBar/>
                <Tabs/>
                <Ribbon>
                    <ClipboardGroup/>
                    <FontGroup/>
                    <ParagraphGroup/>
                    <StylesGroup/>
                    <EditingGroups/>
                    <RibbonEnd>
                        <button aria-label="Collapse ribbon"><Icon w={12} h={8} sw={1.800}><path d="M1 7l5-5 5 5"/></Icon></button>
                    </RibbonEnd>
                </Ribbon>
                <Document/>
                <Status/>
                <BottomBar/>
            </Window>
        </>
    )
}


export default App;
